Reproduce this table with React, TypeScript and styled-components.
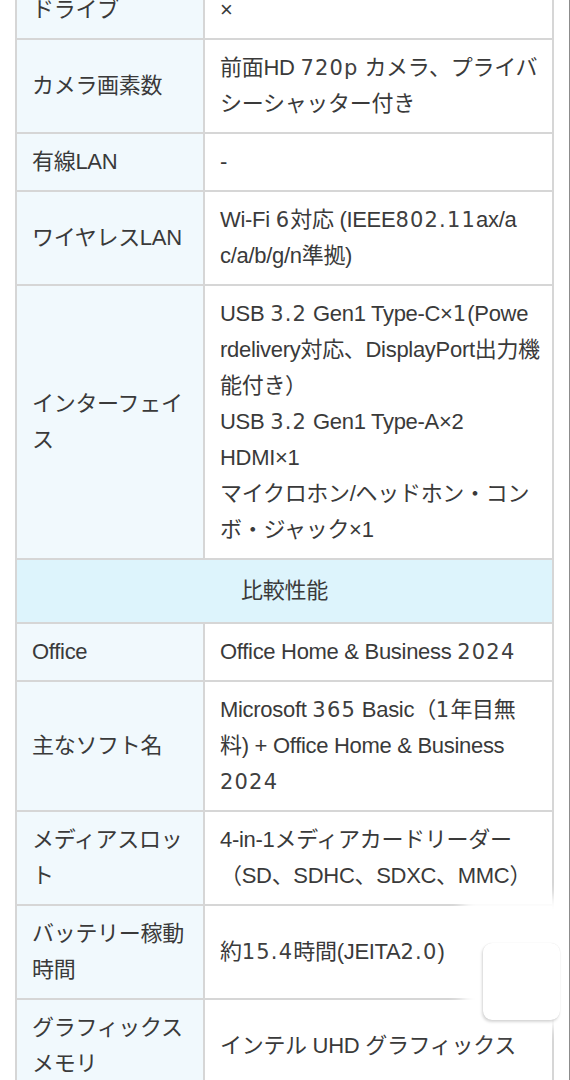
import React from 'react';
import styled, { createGlobalStyle } from 'styled-components';

const Global = createGlobalStyle`
  html, body { margin: 0; padding: 0; background: #fff; }
  body {
    font-family: "Liberation Sans", "Noto Sans CJK JP", sans-serif;
    color: #3a3a3a;
    overflow: hidden;
  }
`;

const Page = styled.div`
  position: relative;
  height: 1080px;
  overflow: hidden;
  box-sizing: border-box;
  border-right: 1px solid #8c8c8c;
  padding-left: 15px;
`;

const Table = styled.table`
  width: 539px;
  margin-top: -20px;
  border-collapse: collapse;
  table-layout: fixed;
  font-size: 22px;
  line-height: 36px;
  letter-spacing: -0.3px;
`;

const LabelCol = styled.col`
  width: 188px;
`;

const Label = styled.th`
  padding: 10px 15px;
  border: 2px solid #d6d6d6;
  background: #f1f9fd;
  font-weight: normal;
  text-align: left;
  vertical-align: middle;
  word-break: break-all;
`;

const Value = styled.td`
  padding: 10px 12px 10px 15px;
  border: 2px solid #d6d6d6;
  background: #fff;
  vertical-align: middle;
  word-break: break-all;
`;

const Section = styled.th`
  padding: 13px 15px;
  border: 2px solid #d6d6d6;
  background: #ddf4fc;
  font-weight: normal;
  text-align: center;
`;

const Num = styled.span`
  font-family: "DejaVu Sans", "Liberation Sans", sans-serif;
  font-size: 21px;
  letter-spacing: 1.2px;
  color: #404040;
`;

const Glow = styled.div`
  position: absolute;
  left: 462px;
  top: 896px;
  width: 108px;
  height: 132px;
  background: #fff;
  filter: blur(7px);
`;

const FloatCard = styled.div`
  position: absolute;
  left: 483px;
  top: 943px;
  width: 77px;
  height: 77px;
  border-radius: 9px;
  background: #fff;
  box-shadow: -1px 2px 3px rgba(0, 0, 0, 0.16), 0 0 1px rgba(0, 0, 0, 0.12);
`;

type Row = { label: string; value: React.ReactNode };

const rowsTop: Row[] = [
  { label: 'ドライブ', value: '×' },
  {
    label: 'カメラ画素数',
    value: (
      <>
        前面HD <Num>720p</Num> カメラ、プライバ<br />シーシャッター付き
      </>
    ),
  },
  { label: '有線LAN', value: '-' },
  {
    label: 'ワイヤレスLAN',
    value: (
      <>
        Wi-Fi <Num>6</Num>対応 (IEEE<Num>802.11</Num>ax/a<br />c/a/b/g/n準拠)
      </>
    ),
  },
  {
    label: 'インターフェイス',
    value: (
      <>
        USB <Num>3.2</Num> Gen1 Type-C×<Num>1</Num>(Powe<br />
        rdelivery対応、DisplayPort出力機<br />
        能付き）
        <br />
        USB <Num>3.2</Num> Gen1 Type-A×2
        <br />
        HDMI×1
        <br />
        マイクロホン/ヘッドホン・コン<br />
        ボ・ジャック×1
      </>
    ),
  },
];

const rowsBottom: Row[] = [
  {
    label: 'Office',
    value: (
      <>
        Office Home &amp; Business <Num>2024</Num>
      </>
    ),
  },
  {
    label: '主なソフト名',
    value: (
      <>
        Microsoft <Num>365</Num> Basic（<Num>1</Num>年目無<br />料) + Office Home &amp; Business
        <br />
        <Num>2024</Num>
      </>
    ),
  },
  {
    label: 'メディアスロット',
    value: (
      <>
        4-in-1メディアカードリーダー<br />（SD、SDHC、SDXC、MMC）
      </>
    ),
  },
  {
    label: 'バッテリー稼動時間',
    value: (
      <>
        約<Num>15.4</Num>時間(JEITA<Num>2.0</Num>)
      </>
    ),
  },
  { label: 'グラフィックスメモリ', value: 'インテル UHD グラフィックス' },
];

export default function App() {
  return (
    <Page>
      <Global />
      <Table>
        <colgroup>
          <LabelCol />
          <col />
        </colgroup>
        <tbody>
          {rowsTop.map((r) => (
            <tr key={r.label}>
              <Label>{r.label}</Label>
              <Value>{r.value}</Value>
            </tr>
          ))}
          <tr>
            <Section colSpan={2}>比較性能</Section>
          </tr>
          {rowsBottom.map((r) => (
            <tr key={r.label}>
              <Label>{r.label}</Label>
              <Value>{r.value}</Value>
            </tr>
          ))}
        </tbody>
      </Table>
      <Glow />
      <FloatCard />
    </Page>
  );
}
